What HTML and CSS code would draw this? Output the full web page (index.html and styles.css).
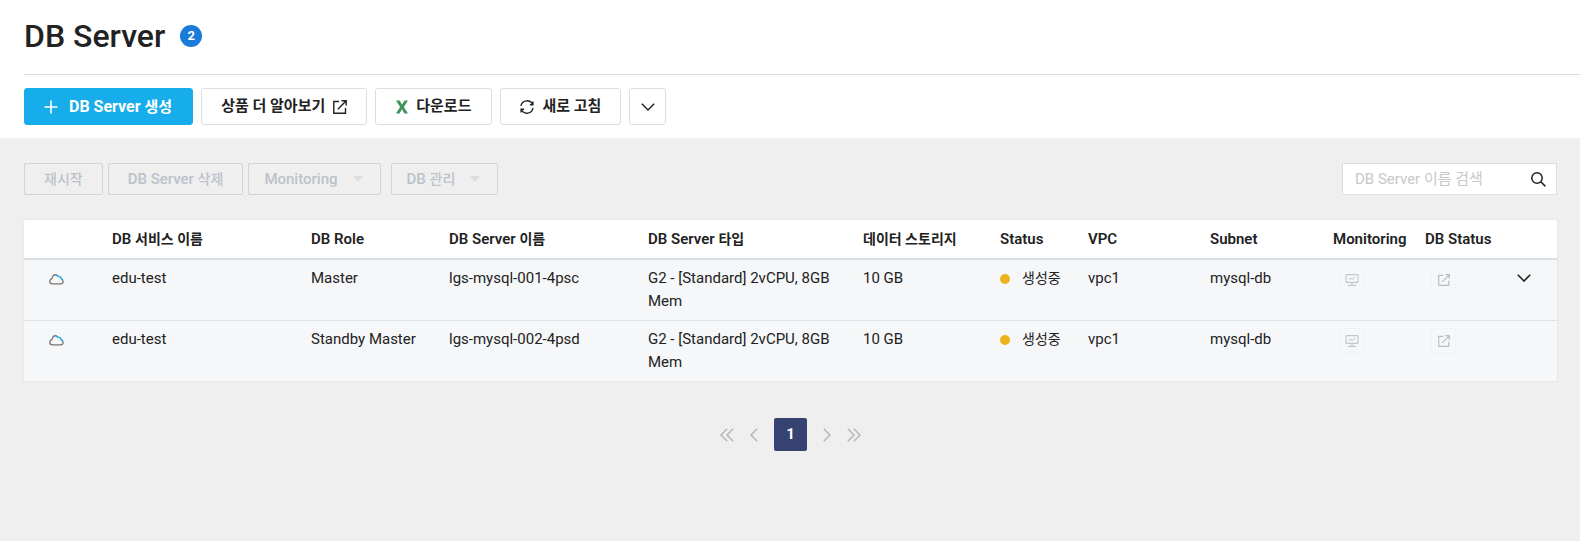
FILE: index.html
```html
<!DOCTYPE html>
<html lang="ko">
<head>
<meta charset="utf-8">
<title>DB Server</title>
<link rel="stylesheet" href="styles.css">
</head>
<body>
<svg class="sprite" aria-hidden="true">
  <symbol id="i-external" viewBox="0 0 14 14"><path d="M6 1.5H.8v11.7h11.7V8M8.500.800H13.200V5.500M13 1L4.800 9.200"/></symbol>
  <symbol id="i-down" viewBox="0 0 14 8"><path d="M.8.8L7 7L13.200.800"/></symbol>
  <symbol id="i-cloud" viewBox="0 0 16 12"><path d="M3.300 4.800C3.300 2.500 4.800.800 6.600.800C7.600.800 8.200 1.200 8.600 1.700M3.300 4.800C1.700 5.300.700 6.500.700 8C.700 9.800 1.800 10.800 3.500 10.800H12.300C14.200 10.800 15.200 9.700 15.200 8.200C15.200 6.700 14.300 5.600 13.100 5.200"/><path class="cloud-accent" d="M7.500 1C8.300 1.200 8.800 1.900 9.100 2.500C11 2 12.800 3.200 13 5C13.700 5.300 14.200 5.700 14.600 6.300"/></symbol>
  <symbol id="i-monitor" viewBox="0 0 14 12"><path d="M1 .7H13V8.300H1ZM7 8.500V11M2.800 11.300H11.200M3.800 5.800L5.800 4.300L7.300 5.300L10 3.200"/></symbol>
  <symbol id="i-prev" viewBox="0 0 8 14"><path d="M7.200.800L1 7L7.200 13.200"/></symbol>
  <symbol id="i-next" viewBox="0 0 8 14"><path d="M.8.8L7 7L.8 13.200"/></symbol>
  <symbol id="i-first" viewBox="0 0 14 14"><path d="M7.200.800L1 7L7.200 13.200M13.200.800L7 7L13.200 13.200"/></symbol>
  <symbol id="i-last" viewBox="0 0 14 14"><path d="M.8.8L7 7L.8 13.200M6.800.800L13 7L6.800 13.200"/></symbol>
</svg>

<header class="page-head">
  <div class="title-row">
    <h1>DB Server</h1>
    <span class="count">2</span>
  </div>
  <div class="toolbar">
    <button class="btn primary" type="button"><svg class="icon plus" viewBox="0 0 14 14"><path d="M7 .5V13.500M.5 7H13.500"/></svg><span>DB Server <span class="ko">생성</span></span></button>
    <button class="btn" type="button"><span class="ko">상품 더 알아보기</span><svg class="icon trail"><use href="#i-external"/></svg></button>
    <button class="btn download" type="button"><svg class="icon excel" viewBox="0 0 12 14"><path d="M0 .5H3.600L6 4.600L8.500.500H12L7.900 6.900L12 13.500H8.400L5.900 9.300L3.500 13.500H0L4.100 6.900Z"/></svg><span class="ko">다운로드</span></button>
    <button class="btn" type="button"><svg class="icon refresh" viewBox="0 0 14 14"><path d="M1 6A6.100 6.100 0 0 1 12.500 4.200M13 8A6.100 6.100 0 0 1 1.500 9.800M12.900 1.500V4.700H9.900M1.100 12.500V9.300H4.100"/></svg><span class="ko">새로 고침</span></button>
    <button class="btn square" type="button" aria-label="더보기"><svg class="icon chevron"><use href="#i-down"/></svg></button>
  </div>
</header>

<main class="content">
  <div class="actions">
    <button class="act" type="button" disabled><span class="ko">재시작</span></button>
    <button class="act" type="button" disabled><span>DB Server <span class="ko">삭제</span></span></button>
    <button class="act menu" type="button" disabled>Monitoring<i class="caret"></i></button>
    <button class="act menu last" type="button" disabled><span>DB <span class="ko">관리</span></span><i class="caret"></i></button>
    <form class="search">
      <input type="text" aria-label="DB Server 이름 검색" placeholder="DB Server 이름 검색">
      <button type="button" aria-label="검색"><svg viewBox="0 0 15 15"><circle cx="6" cy="6" r="5.200"/><path d="M9.800 9.800L14.400 14.400"/></svg></button>
    </form>
  </div>

  <table class="grid">
    <colgroup><col class="c-icon"><col class="c-service"><col class="c-role"><col class="c-name"><col class="c-type"><col class="c-storage"><col class="c-status"><col class="c-vpc"><col class="c-subnet"><col class="c-monitor"><col class="c-db"></colgroup>
    <thead>
      <tr>
        <th></th>
        <th>DB <span class="ko">서비스 이름</span></th>
        <th>DB Role</th>
        <th>DB Server <span class="ko">이름</span></th>
        <th>DB Server <span class="ko">타입</span></th>
        <th><span class="ko">데이터 스토리지</span></th>
        <th>Status</th>
        <th>VPC</th>
        <th>Subnet</th>
        <th>Monitoring</th>
        <th>DB Status</th>
      </tr>
    </thead>
    <tbody>
      <tr>
        <td><svg class="cloud"><use href="#i-cloud"/></svg></td>
        <td>edu-test</td>
        <td>Master</td>
        <td>lgs-mysql-001-4psc</td>
        <td>G2 - [Standard] 2vCPU, 8GB Mem</td>
        <td>10 GB</td>
        <td><div class="status"><i class="dot"></i><span class="ko">생성중</span></div></td>
        <td>vpc1</td>
        <td>mysql-db</td>
        <td><button class="mini" type="button" disabled aria-label="Monitoring"><svg class="monitor"><use href="#i-monitor"/></svg></button></td>
        <td><div class="last-cell"><button class="mini" type="button" disabled aria-label="DB Status"><svg class="open"><use href="#i-external"/></svg></button><button class="expand" type="button" aria-label="펼치기"><svg class="chevron"><use href="#i-down"/></svg></button></div></td>
      </tr>
      <tr>
        <td><svg class="cloud"><use href="#i-cloud"/></svg></td>
        <td>edu-test</td>
        <td>Standby Master</td>
        <td>lgs-mysql-002-4psd</td>
        <td>G2 - [Standard] 2vCPU, 8GB Mem</td>
        <td>10 GB</td>
        <td><div class="status"><i class="dot"></i><span class="ko">생성중</span></div></td>
        <td>vpc1</td>
        <td>mysql-db</td>
        <td><button class="mini" type="button" disabled aria-label="Monitoring"><svg class="monitor"><use href="#i-monitor"/></svg></button></td>
        <td><div class="last-cell"><button class="mini" type="button" disabled aria-label="DB Status"><svg class="open"><use href="#i-external"/></svg></button></div></td>
      </tr>
    </tbody>
  </table>

  <nav class="pager" aria-label="페이지">
    <button type="button" aria-label="처음"><svg class="double"><use href="#i-first"/></svg></button>
    <button type="button" aria-label="이전"><svg class="single"><use href="#i-prev"/></svg></button>
    <button type="button" class="current">1</button>
    <button type="button" aria-label="다음"><svg class="single"><use href="#i-next"/></svg></button>
    <button type="button" aria-label="마지막"><svg class="double"><use href="#i-last"/></svg></button>
  </nav>
</main>
</body>
</html>
```
FILE: styles.css
```css
* { box-sizing: border-box; }
body {
  margin: 0;
  min-height: 100vh;
  background: #efefef;
  color: #222;
  font: 400 15px/23px Roboto, "Noto Sans CJK KR", sans-serif;
}
button, input { font: inherit; color: inherit; margin: 0; }
button { padding: 0; border: 0; background: none; display: flex; align-items: center; justify-content: center; white-space: nowrap; }
svg { display: block; fill: none; stroke: currentColor; overflow: visible; }
.sprite { position: absolute; width: 0; height: 0; }
.ko { font-size: 14px; }

.page-head { background: #fff; padding-left: 24px; }
.title-row { display: flex; align-items: center; gap: 15px; height: 75px; border-bottom: 1px solid #dcdcdc; padding-bottom: 2px; }
h1 { margin: 0; font-size: 32px; line-height: 36px; font-weight: 500; }
.count { width: 22px; height: 22px; border-radius: 50%; background: #1a7cd8; color: #fff; font-size: 13px; line-height: 22px; font-weight: 700; text-align: center; }
.toolbar { display: flex; gap: 8px; padding: 13px 0; }
.btn { height: 37px; padding: 0 19px; border: 1px solid #dedede; border-radius: 3px; background: #fff; font-size: 16px; font-weight: 600; }
.btn .ko { font-size: 15px; }
.btn.primary { padding: 0 20px 0 19px; background: #17adea; border-color: #17adea; color: #fff; font-weight: 700; }
.btn.download { padding: 0 20px; }
.icon { width: 14px; height: 14px; stroke-width: 1.4; margin-right: 8px; }
.icon.plus { margin-right: 11px; stroke-width: 1.6; }
.icon.trail { margin: 0 0 0 8px; }
.icon.excel { width: 12px; fill: #43935f; stroke: none; }
.btn.square { width: 37px; padding: 0; }
.icon.chevron { width: 14px; height: 8px; margin: 0; }

.content { padding: 25px 23px 24px 24px; }
.actions { display: flex; gap: 5px; height: 32px; }
.act { border: 1px solid #ced5de; border-radius: 2px; padding: 0 19px; color: #bcc2ca; font-weight: 500; }
.act.menu { padding: 0 17px 0 15px; }
.act.last { margin-left: 5px; }
.caret { margin-left: 15px; border: 5px solid transparent; border-top: 6px solid #dadde1; border-bottom: 0; }
.search { display: flex; width: 215px; margin-left: auto; border: 1px solid #dedede; background: #fff; }
.search input { flex: 1; min-width: 0; border: 0; padding: 0 0 0 12px; background: none; outline: 0; }
.search input::placeholder { color: #c8c8c8; opacity: 1; }
.search button { width: 36px; }
.search svg { width: 15px; height: 15px; stroke-width: 1.5; }

.grid { width: 100%; margin-top: 25px; table-layout: fixed; border-collapse: separate; border-spacing: 0; background: #f5f7f9; border-radius: 3px 3px 0 0; box-shadow: 0 0 2px #d8d8d8; }
.c-icon, .c-status { width: 88px; }
.c-service, .c-name { width: 199px; }
.c-role { width: 138px; }
.c-type { width: 215px; }
.c-storage { width: 137px; }
.c-vpc { width: 122px; }
.c-subnet { width: 123px; }
.c-monitor { width: 92px; }
.c-db { width: 132px; }
th { height: 40px; padding: 0; background: #fff; border-bottom: 2px solid #dadde0; text-align: left; font-weight: 600; white-space: nowrap; }
th:first-child { border-top-left-radius: 3px; }
th:last-child { border-top-right-radius: 3px; }
td { padding: 7px 0; vertical-align: top; }
tbody tr + tr td { border-top: 1px solid #dfe1e4; }
.cloud { width: 15px; height: 11px; margin: 7px 0 0 25px; stroke: #777; stroke-width: 1.4; }
.cloud-accent { stroke: #20a7e4; }
.status { display: flex; align-items: center; gap: 12px; }
.dot { width: 10px; height: 10px; border-radius: 50%; background: #ebb31c; }
.mini { width: 25px; height: 25px; margin-left: 6px; border: 1px solid #f2f3f5; color: #bbbdbf; }
.monitor { width: 14px; height: 12px; }
.open { width: 12px; height: 12px; stroke-width: 1.4; }
.last-cell { display: flex; justify-content: space-between; padding-right: 26px; }
.expand { height: 21px; }
.expand svg { width: 14px; height: 8px; stroke-width: 1.6; }

.pager { display: flex; align-items: center; justify-content: center; gap: 16px; margin-top: 37px; color: #b5b5b5; }
.pager button { height: 33px; }
.pager svg { height: 14px; stroke-width: 1.4; }
.double { width: 14px; }
.single { width: 8px; }
.pager .current { width: 33px; border-radius: 2px; background: #354272; color: #fff; font-weight: 700; }
```
